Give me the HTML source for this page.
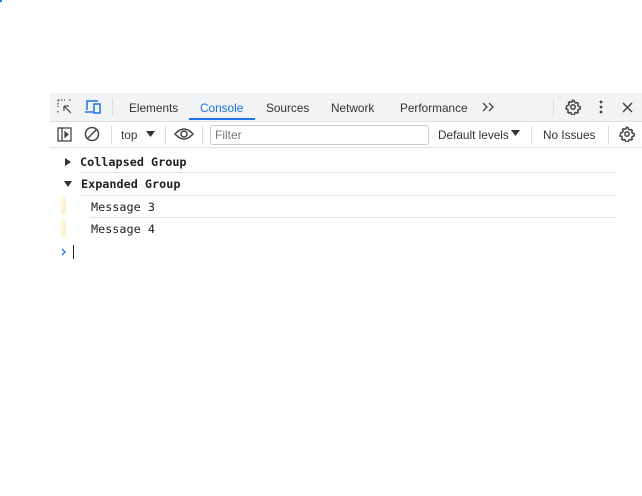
<!DOCTYPE html>
<html><head><style>
body{margin:0;width:642px;height:496px;background:#fff;position:relative;font-family:"Liberation Sans",sans-serif;overflow:hidden}
.dot{position:absolute;left:0;top:0;width:2px;height:2px;background:#1a73e8}
.tabs{position:absolute;left:50px;top:93px;width:592px;height:28px;background:#f1f3f4;border-bottom:1px solid #e0e0e0;font-size:11.8px;color:#333}
.tabs span{position:absolute;top:8px}
.tool{position:absolute;left:50px;top:122px;width:592px;height:25px;border-bottom:1px solid #e0e0e0;font-size:11.8px;color:#333}
.sep{position:absolute;width:1px;background:#ddd}
.mono{font-family:"DejaVu Sans Mono","Liberation Mono",monospace;font-size:11.8px;position:absolute;color:#202124}
.line{position:absolute;height:1px;background:#d6e6f0}
</style></head><body>
<div class="dot"></div>
<svg width="0" height="0" style="position:absolute"><defs><g id="gear"><path d="M8 1.5l1.3.3.3 1.6 1.2.7 1.5-.6 1 1-.6 1.5.7 1.2 1.6.3.3 1.3-.3 1.3-1.6.3-.7 1.2.6 1.5-1 1-1.5-.6-1.2.7-.3 1.6-1.3.3-1.3-.3-.3-1.6-1.2-.7-1.5.6-1-1 .6-1.5-.7-1.2-1.6-.3L1.5 8l.3-1.3 1.6-.3.7-1.2-.6-1.5 1-1 1.5.6 1.2-.7.3-1.6z" fill="none" stroke="#444" stroke-width="1.5" stroke-linejoin="round"/><circle cx="8" cy="8" r="2.2" fill="none" stroke="#444" stroke-width="1.5"/></g></defs></svg>
<div class="tabs">
<svg style="position:absolute;left:7px;top:6px" width="16" height="16" viewBox="0 0 16 16" fill="none" stroke="#555" stroke-width="1.3"><path d="M1 1h7M1 1v7M1 12v2M12 1h2" stroke-dasharray="1.5 1.5"/><path d="M7 7l7 7M7 7h5M7 7v5"/></svg>
<svg style="position:absolute;left:34px;top:6px" width="18" height="16" viewBox="0 0 18 16" fill="none" stroke="#1a73e8" stroke-width="1.5"><path d="M3 11V2h11M1 13h8"/><rect x="10" y="5" width="6" height="9"/></svg>
<div class="sep" style="left:62px;top:5px;height:18px"></div>
<span style="left:79px">Elements</span>
<span style="left:150px;color:#1a73e8">Console</span>
<div style="position:absolute;left:139px;top:25px;width:66px;height:2px;background:#1a73e8"></div>
<span style="left:216px">Sources</span>
<span style="left:281px">Network</span>
<span style="left:350px">Performance</span>
<svg style="position:absolute;left:432px;top:9px" width="14" height="10" viewBox="0 0 14 10" fill="none" stroke="#444" stroke-width="1.3"><path d="M1 1l4 4-4 4M7 1l4 4-4 4"/></svg>
<div class="sep" style="left:503px;top:5px;height:18px"></div>
<svg style="position:absolute;left:515px;top:6px" width="16" height="16" viewBox="0 0 16 16"><use href="#gear"/></svg>
<svg style="position:absolute;left:549px;top:7px" width="4" height="14"><circle cx="2" cy="2" r="1.4" fill="#444"/><circle cx="2" cy="7" r="1.4" fill="#444"/><circle cx="2" cy="12" r="1.4" fill="#444"/></svg>
<svg style="position:absolute;left:572px;top:9px" width="11" height="11" viewBox="0 0 11 11" stroke="#444" stroke-width="1.5"><path d="M1 1l9 9M10 1l-9 9"/></svg>
</div>
<div class="tool">
<svg style="position:absolute;left:7px;top:5px" width="15" height="15" viewBox="0 0 15 15" fill="none" stroke="#444" stroke-width="1.3"><rect x="1" y="1" width="13" height="13"/><path d="M5 1v13"/><path d="M8 5l3 2.5L8 10z" fill="#444"/></svg>
<svg style="position:absolute;left:34px;top:4px" width="16" height="16" viewBox="0 0 16 16" fill="none" stroke="#444" stroke-width="1.5"><circle cx="8" cy="8" r="6.5"/><path d="M3.5 12.5l9-9"/></svg>
<div class="sep" style="left:61px;top:4px;height:18px"></div>
<span style="position:absolute;left:71px;top:6px">top</span>
<svg style="position:absolute;left:96px;top:9px" width="9" height="6"><path d="M0 0h9L4.5 6z" fill="#333"/></svg>
<div class="sep" style="left:115px;top:4px;height:18px"></div>
<svg style="position:absolute;left:124px;top:5px" width="20" height="14" viewBox="0 0 20 14" fill="none" stroke="#444" stroke-width="1.5"><path d="M1 7q9-10 18 0q-9 10-18 0z"/><circle cx="10" cy="7" r="3"/></svg>
<div class="sep" style="left:152px;top:4px;height:18px"></div>
<div style="position:absolute;left:160px;top:3px;border:1px solid #ccc;border-radius:3px;font-size:12px;color:#777;line-height:18px;padding-left:4px;box-sizing:border-box;width:219px;height:20px">Filter</div>
<span style="position:absolute;left:388px;top:6px">Default levels</span>
<svg style="position:absolute;left:461px;top:8px" width="9" height="6"><path d="M0 0h9L4.5 6z" fill="#333"/></svg>
<div class="sep" style="left:481px;top:4px;height:18px"></div>
<span style="position:absolute;left:493px;top:6px">No Issues</span>
<div class="sep" style="left:558px;top:4px;height:18px"></div>
<svg style="position:absolute;left:569px;top:4px" width="16" height="16" viewBox="0 0 16 16"><use href="#gear"/></svg>
</div>
<svg style="position:absolute;left:65px;top:158px" width="6" height="8"><path d="M0 0l6 4-6 4z" fill="#333"/></svg>
<div class="mono" style="left:80px;top:155px;font-weight:bold">Collapsed Group</div>
<div class="line" style="left:80px;top:172px;width:536px"></div>
<svg style="position:absolute;left:64px;top:181px" width="8" height="6"><path d="M0 0h8L4 6z" fill="#333"/></svg>
<div class="mono" style="left:81px;top:177px;font-weight:bold">Expanded Group</div>
<div class="line" style="left:80px;top:195px;width:536px"></div>
<div style="position:absolute;left:61px;top:197px;width:5px;height:17px;background:#fdf3d0"></div>
<div class="mono" style="left:91px;top:200px">Message 3</div>
<div class="line" style="left:90px;top:217px;width:526px"></div>
<div style="position:absolute;left:61px;top:220px;width:5px;height:17px;background:#fdf3d0"></div>
<div class="mono" style="left:91px;top:222px">Message 4</div>
<svg style="position:absolute;left:61px;top:248px" width="5" height="8"><path d="M1 1l3 3-3 3" fill="none" stroke="#1a73e8" stroke-width="1.3"/></svg>
<div style="position:absolute;left:73px;top:245px;width:1px;height:14px;background:#222"></div>
</body></html>
